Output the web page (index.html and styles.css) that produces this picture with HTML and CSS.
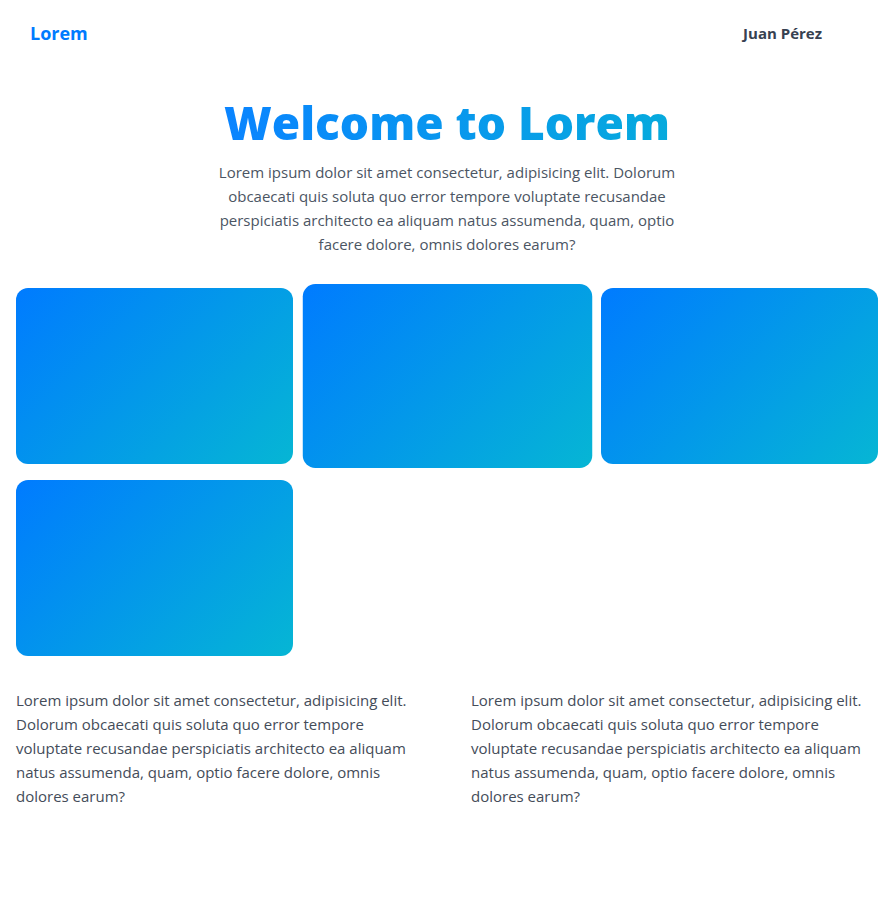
FILE: index.html
```html
<!DOCTYPE html>
<html lang="es">
<head>
<meta charset="utf-8">
<title>Lorem</title>
<link rel="stylesheet" href="styles.css">
</head>
<body>
<header class="nav">
  <a class="brand" href="#">Lorem</a>
  <span class="user">Juan Pérez</span>
</header>
<main>
  <section class="hero">
    <h1 class="hero-title">Welcome to Lorem</h1>
    <p class="hero-text">Lorem ipsum dolor sit amet consectetur, adipisicing elit. Dolorum obcaecati quis soluta quo error tempore voluptate recusandae perspiciatis architecto ea aliquam natus assumenda, quam, optio facere dolore, omnis dolores earum?</p>
  </section>
  <section class="cards">
    <div class="card"></div>
    <div class="card card-active"></div>
    <div class="card"></div>
    <div class="card"></div>
  </section>
  <section class="columns">
    <p>Lorem ipsum dolor sit amet consectetur, adipisicing elit. Dolorum obcaecati quis soluta quo error tempore voluptate recusandae perspiciatis architecto ea aliquam natus assumenda, quam, optio facere dolore, omnis dolores earum?</p>
    <p>Lorem ipsum dolor sit amet consectetur, adipisicing elit. Dolorum obcaecati quis soluta quo error tempore voluptate recusandae perspiciatis architecto ea aliquam natus assumenda, quam, optio facere dolore, omnis dolores earum?</p>
  </section>
</main>
</body>
</html>
```
FILE: styles.css
```css
* { box-sizing: border-box; }
body {
  margin: 0;
  background: #fff;
  font-family: "Open Sans", "Liberation Sans", sans-serif;
  color: #4b5563;
}
.nav {
  display: flex;
  justify-content: space-between;
  align-items: center;
  padding: 20px 72px 20px 30px;
  height: 66px;
}
.brand {
  color: #007bff;
  font-weight: 700;
  font-size: 18px;
  text-decoration: none;
}
.user {
  color: #374151;
  font-weight: 700;
  font-size: 15px;
}
.hero {
  text-align: center;
  padding-top: 26px;
}
.hero-title {
  margin: 0;
  font-size: 46px;
  font-weight: 800;
  line-height: 60px;
  background: linear-gradient(90deg, #0a84ff, #06aadd);
  -webkit-background-clip: text;
  background-clip: text;
  color: transparent;
  display: inline-block;
}
.hero-text {
  max-width: 480px;
  margin: 8px auto 0;
  font-size: 15px;
  line-height: 24px;
}
.cards {
  display: grid;
  grid-template-columns: repeat(3, 1fr);
  gap: 16px;
  padding: 0 16px;
  margin-top: 32px;
}
.card {
  height: 176px;
  border-radius: 12px;
  background: linear-gradient(135deg, #007bff, #06b6d4);
}
.card-active {
  transform: scale(1.045);
}
.columns {
  display: grid;
  grid-template-columns: 1fr 1fr;
  gap: 48px;
  padding: 0 16px;
  margin-top: 32px;
}
.columns p {
  margin: 0;
  font-size: 15px;
  line-height: 24px;
  color: #444c59;
}
```
